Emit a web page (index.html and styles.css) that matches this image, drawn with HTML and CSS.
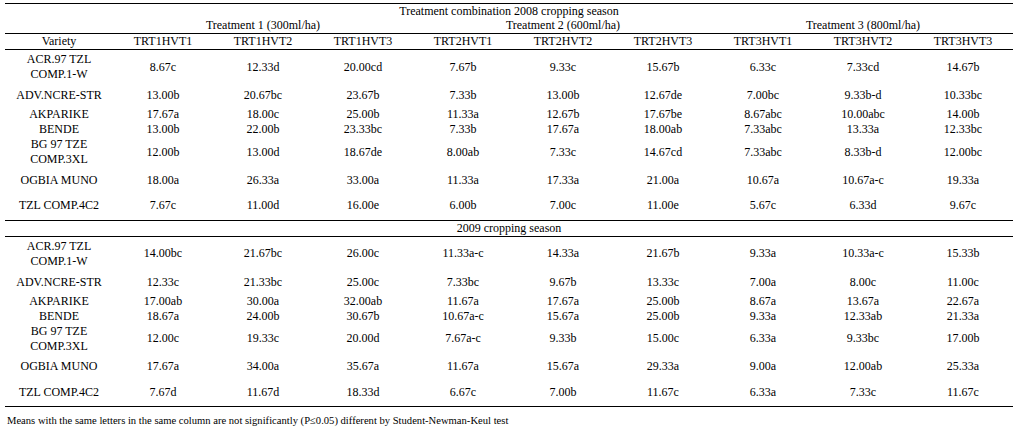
FILE: index.html
```html
<!DOCTYPE html>
<html>
<head>
<meta charset="utf-8">
<link rel="stylesheet" href="styles.css">
</head>
<body>
<table class="data">
  <colgroup>
    <col class="c-var">
    <col class="c-val"><col class="c-val"><col class="c-val">
    <col class="c-val"><col class="c-val"><col class="c-val">
    <col class="c-val"><col class="c-val"><col class="c-val">
  </colgroup>
  <tr class="r-title"><td colspan="10">Treatment combination 2008 cropping season</td></tr>
  <tr class="r-treat">
    <td></td>
    <td colspan="3">Treatment 1 (300ml/ha)</td>
    <td colspan="3">Treatment 2 (600ml/ha)</td>
    <td colspan="3">Treatment 3 (800ml/ha)</td>
  </tr>
  <tr class="r-head">
    <td>Variety</td>
    <td>TRT1HVT1</td><td>TRT1HVT2</td><td>TRT1HVT3</td>
    <td>TRT2HVT1</td><td>TRT2HVT2</td><td>TRT2HVT3</td>
    <td>TRT3HVT1</td><td>TRT3HVT2</td><td>TRT3HVT3</td>
  </tr>
  <tr class="r-2l">
    <td>ACR.97 TZL<br>COMP.1-W</td>
    <td>8.67c</td><td>12.33d</td><td>20.00cd</td><td>7.67b</td><td>9.33c</td><td>15.67b</td><td>6.33c</td><td>7.33cd</td><td>14.67b</td>
  </tr>
  <tr class="r-adv">
    <td>ADV.NCRE-STR</td>
    <td>13.00b</td><td>20.67bc</td><td>23.67b</td><td>7.33b</td><td>13.00b</td><td>12.67de</td><td>7.00bc</td><td>9.33b-d</td><td>10.33bc</td>
  </tr>
  <tr class="r-1l">
    <td>AKPARIKE</td>
    <td>17.67a</td><td>18.00c</td><td>25.00b</td><td>11.33a</td><td>12.67b</td><td>17.67be</td><td>8.67abc</td><td>10.00abc</td><td>14.00b</td>
  </tr>
  <tr class="r-1l">
    <td>BENDE</td>
    <td>13.00b</td><td>22.00b</td><td>23.33bc</td><td>7.33b</td><td>17.67a</td><td>18.00ab</td><td>7.33abc</td><td>13.33a</td><td>12.33bc</td>
  </tr>
  <tr class="r-bg">
    <td>BG 97 TZE<br>COMP.3XL</td>
    <td>12.00b</td><td>13.00d</td><td>18.67de</td><td>8.00ab</td><td>7.33c</td><td>14.67cd</td><td>7.33abc</td><td>8.33b-d</td><td>12.00bc</td>
  </tr>
  <tr class="r-og">
    <td>OGBIA MUNO</td>
    <td>18.00a</td><td>26.33a</td><td>33.00a</td><td>11.33a</td><td>17.33a</td><td>21.00a</td><td>10.67a</td><td>10.67a-c</td><td>19.33a</td>
  </tr>
  <tr class="r-tzl">
    <td>TZL COMP.4C2</td>
    <td>7.67c</td><td>11.00d</td><td>16.00e</td><td>6.00b</td><td>7.00c</td><td>11.00e</td><td>5.67c</td><td>6.33d</td><td>9.67c</td>
  </tr>
  <tr class="r-season"><td colspan="10">2009 cropping season</td></tr>
  <tr class="r-2l">
    <td>ACR.97 TZL<br>COMP.1-W</td>
    <td>14.00bc</td><td>21.67bc</td><td>26.00c</td><td>11.33a-c</td><td>14.33a</td><td>21.67b</td><td>9.33a</td><td>10.33a-c</td><td>15.33b</td>
  </tr>
  <tr class="r-adv">
    <td>ADV.NCRE-STR</td>
    <td>12.33c</td><td>21.33bc</td><td>25.00c</td><td>7.33bc</td><td>9.67b</td><td>13.33c</td><td>7.00a</td><td>8.00c</td><td>11.00c</td>
  </tr>
  <tr class="r-1l">
    <td>AKPARIKE</td>
    <td>17.00ab</td><td>30.00a</td><td>32.00ab</td><td>11.67a</td><td>17.67a</td><td>25.00b</td><td>8.67a</td><td>13.67a</td><td>22.67a</td>
  </tr>
  <tr class="r-1l">
    <td>BENDE</td>
    <td>18.67a</td><td>24.00b</td><td>30.67b</td><td>10.67a-c</td><td>15.67a</td><td>25.00b</td><td>9.33a</td><td>12.33ab</td><td>21.33a</td>
  </tr>
  <tr class="r-bg">
    <td>BG 97 TZE<br>COMP.3XL</td>
    <td>12.00c</td><td>19.33c</td><td>20.00d</td><td>7.67a-c</td><td>9.33b</td><td>15.00c</td><td>6.33a</td><td>9.33bc</td><td>17.00b</td>
  </tr>
  <tr class="r-og">
    <td>OGBIA MUNO</td>
    <td>17.67a</td><td>34.00a</td><td>35.67a</td><td>11.67a</td><td>15.67a</td><td>29.33a</td><td>9.00a</td><td>12.00ab</td><td>25.33a</td>
  </tr>
  <tr class="r-tzl r-last">
    <td>TZL COMP.4C2</td>
    <td>7.67d</td><td>11.67d</td><td>18.33d</td><td>6.67c</td><td>7.00b</td><td>11.67c</td><td>6.33a</td><td>7.33c</td><td>11.67c</td>
  </tr>
</table>
<p class="note">Means with the same letters in the same column are not significantly (P≤0.05) different by Student-Newman-Keul test</p>
</body>
</html>
```

FILE: styles.css
```css
html, body {
  margin: 0;
  padding: 0;
  background: #fff;
}
body {
  font-family: "Liberation Serif", "Times New Roman", serif;
  color: #000;
  padding: 3px 0 0 5px;
}
.data {
  border-collapse: collapse;
  table-layout: fixed;
  width: 1008px;
  font-size: 12px;
  line-height: 15px;
}
.c-var { width: 108px; }
.c-val { width: 100px; }
.data td {
  padding: 0;
  text-align: center;
  vertical-align: middle;
  white-space: nowrap;
}
.r-title td {
  border-top: 1px solid #000;
  height: 14px;
  line-height: 14px;
}
.r-treat td {
  border-bottom: 1px solid #000;
  height: 15px;
  vertical-align: top;
  line-height: 14px;
}
.r-head td {
  border-bottom: 1px solid #000;
  height: 14px;
}
.r-2l td { height: 34px; }
.r-adv td { height: 23px; }
.r-1l td { height: 15px; }
.r-bg td { height: 30px; }
.r-og td { height: 26px; }
.r-tzl td {
  height: 27px;
  vertical-align: top;
  padding-top: 5px;
  box-sizing: border-box;
  border-bottom: 1px solid #000;
}
.r-season td {
  border-bottom: 1px solid #000;
  height: 14px;
}
.note {
  margin: 7px 0 0 2px;
  font-size: 10.6px;
  line-height: 13px;
}
```
